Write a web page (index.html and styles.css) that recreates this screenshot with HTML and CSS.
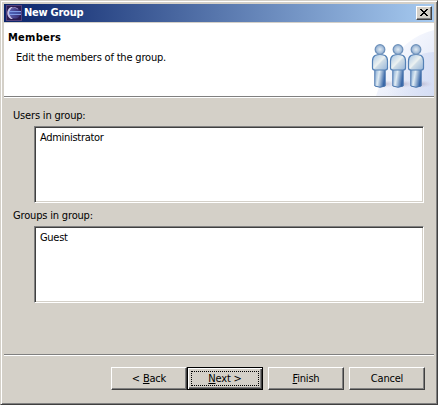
FILE: index.html
```html
<!DOCTYPE html>
<html lang="en">
<head>
<meta charset="utf-8">
<title>New Group</title>
<link rel="stylesheet" href="styles.css">
</head>
<body>
<main class="window">
  <header class="titlebar">
    <svg class="app-icon" viewBox="0 0 16 16" aria-hidden="true">
      <defs>
        <linearGradient id="orb" x1="0" y1="0" x2="1" y2="0"><stop offset="0" stop-color="#5a5fae"/><stop offset="1" stop-color="#35286c"/></linearGradient>
      </defs>
      <rect width="16" height="16" fill="#54407c"/>
      <rect x="1" y="1" width="14" height="14" fill="#2b1c50"/>
      <path d="M5 2C0 4 0 12 5 14L7 14C3 11 3 5 7 2Z" fill="#c3bfe6"/>
      <circle cx="9" cy="8" r="5.6" fill="url(#orb)"/>
      <path d="M3 6.500H15M3 9.500H15" stroke="#7f9be6"/>
      <path d="M3 8H15" stroke="#4668c4"/>
      <path d="M6 3Q9 1.500 12 4" stroke="#8f7fb8" fill="none"/>
    </svg>
    <h1 class="title">New Group</h1>
    <button class="close" aria-label="Close">
      <svg viewBox="0 0 8 7" shape-rendering="crispEdges"><path d="M0 0h2v1h1v1h2V1h1V0h2v1H7v1H6v1H5v1h1v1h1v1h1v1H6V6H5V5H3v1H2v1H0V6h1V5h1V4h1V3H2V2H1V1H0Z"/></svg>
    </button>
  </header>
  <section class="banner">
    <div class="banner-text">
      <h2 class="heading">Members</h2>
      <p class="description">Edit the members of the group.</p>
    </div>
    <svg class="people" viewBox="0 0 76 73" aria-hidden="true">
      <defs>
        <linearGradient id="body" x1="0" y1="0" x2="1" y2="1"><stop offset="0" stop-color="#a5c3e2"/><stop offset=".48" stop-color="#edf2f1"/><stop offset=".55" stop-color="#cedce6"/><stop offset="1" stop-color="#96b5d9"/></linearGradient>
        <linearGradient id="legs" x1="0" y1="0" x2="1" y2=".3"><stop offset="0" stop-color="#7fa5d0"/><stop offset=".45" stop-color="#dfebf3"/><stop offset="1" stop-color="#3766a7"/></linearGradient>
        <radialGradient id="head"><stop offset="0" stop-color="#e1ebf2"/><stop offset="1" stop-color="#8eacd0"/></radialGradient>
        <linearGradient id="glow" x1="0" y1="0" x2="1" y2="1"><stop offset="0" stop-color="#fcfdff"/><stop offset=".35" stop-color="#f5f7fd"/><stop offset="1" stop-color="#dce3f6"/></linearGradient>
        <linearGradient id="inner" x1="0" y1="0" x2="1" y2="0"><stop offset="0" stop-color="#d3dcf4" stop-opacity="0"/><stop offset="1" stop-color="#d3dcf4" stop-opacity=".8"/></linearGradient>
        <radialGradient id="shade"><stop offset="0" stop-color="#aaa5be" stop-opacity=".65"/><stop offset="1" stop-color="#cfc9da" stop-opacity="0"/></radialGradient>
        <g id="person">
          <ellipse cx="13" cy="40" rx="12" ry="4" fill="url(#shade)"/>
          <path d="M2.800 25H13.200V42Q8 44.500 2.800 42Z" fill="url(#legs)" stroke="#4774ad"/>
          <path d="M3 11.500Q8 9.500 13 11.500Q15.500 13 15.500 17V24Q15.500 26 13 26H3Q.5 26 .5 24V17Q.5 13 3 11.500Z" fill="url(#body)" stroke="#5481b6" stroke-width="1.200"/>
          <circle cx="8" cy="5.500" r="4.800" fill="url(#head)" stroke="#6f92bb" stroke-width="1.300"/>
        </g>
      </defs>
      <path d="M76 7Q49 14 35 37Q24 53 18 73H76Z" fill="url(#glow)"/>
      <path d="M76 29Q54 30 40 47Q30 59 29 73H76Z" fill="url(#inner)"/>
      <use href="#person" x="14" y="21"/>
      <use href="#person" x="32" y="21"/>
      <use href="#person" x="50" y="21"/>
    </svg>
  </section>
  <section class="content">
    <h3 class="label users-label">Users in group:</h3>
    <ul class="list"><li class="admin">Administrator</li></ul>
    <h3 class="label groups-label">Groups in group:</h3>
    <ul class="list"><li class="guest">Guest</li></ul>
  </section>
  <footer class="actions">
    <button class="button"><span>&lt; <u>B</u>ack</span></button>
    <button class="button default"><span><u>N</u>ext &gt;</span></button>
    <button class="button spaced"><span><u>F</u>inish</span></button>
    <button class="button spaced"><span>Cancel</span></button>
  </footer>
</main>
</body>
</html>
```
FILE: styles.css
```css
* { box-sizing: border-box; }
body, h1, h2, h3, p, ul { margin: 0; padding: 0; }
body {
  overflow: hidden;
  font: 11px/14px "DejaVu Sans Condensed", "DejaVu Sans", sans-serif;
  font-stretch: condensed;
  color: #000;
}
.window {
  display: flex;
  flex-direction: column;
  width: 438px;
  height: 405px;
  padding: 2px;
  background: #d4d0c8;
  border: 1px solid;
  border-color: #d4d0c8 #404040 #404040 #d4d0c8;
  box-shadow: inset 1px 1px #fff, inset -1px -1px #808080;
}
.titlebar {
  display: flex;
  align-items: center;
  flex: none;
  height: 18px;
  margin: 1px 1px 0;
  padding: 0 2px;
  background: linear-gradient(90deg, #0a246a, #a6caf0);
}
.app-icon { width: 16px; height: 16px; flex: none; }
.title {
  margin-left: 2px;
  font-size: 11px;
  line-height: 18px;
  color: #fff;
  letter-spacing: -.25px;
  white-space: nowrap;
}
.close {
  display: flex;
  justify-content: center;
  align-items: center;
  width: 16px;
  height: 14px;
  margin-left: auto;
  padding: 0 1px 1px 0;
  background: #d4d0c8;
  border: 1px solid;
  border-color: #fff #404040 #404040 #fff;
  box-shadow: inset -1px -1px #808080;
}
.close svg { width: 8px; height: 7px; }
.banner {
  display: flex;
  justify-content: space-between;
  flex: none;
  height: 75px;
  margin: 1px 1px 0;
  overflow: hidden;
  background: #fff;
  border-bottom: 1px solid #fff;
  box-shadow: inset 0 -1px #808080;
}
.banner-text { padding: 8px 0 0 4px; white-space: nowrap; }
.heading { font-size: 11px; line-height: 14px; letter-spacing: .25px; }
.description { margin: 6px 0 0 8px; letter-spacing: -.19px; }
.people { width: 76px; height: 73px; }
.content { flex: 1; padding: 11px 11px 0 10px; }
.label { font-size: 11px; font-weight: normal; line-height: 14px; letter-spacing: -.17px; white-space: nowrap; }
.groups-label { margin-top: 6px; }
.list {
  width: 390px;
  height: 77px;
  margin: 3px 0 0 21px;
  padding: 4px 3px 3px;
  list-style: none;
  letter-spacing: -.3px;
  background: #fff;
  border: 1px solid;
  border-color: #808080 #fff #fff #808080;
  box-shadow: inset 1px 1px #404040, inset -1px -1px #d4d0c8;
}
.list li { padding-left: 2px; }
.actions {
  display: flex;
  justify-content: flex-end;
  flex: none;
  height: 48px;
  margin: 0 1px;
  padding: 12px 9px 0 0;
  border-top: 1px solid #808080;
  box-shadow: inset 0 1px #fff;
}
.button {
  width: 76px;
  height: 23px;
  padding: 0;
  font: inherit;
  letter-spacing: -.2px;
  color: #000;
  background: #d4d0c8;
  border: 1px solid;
  border-color: #fff #404040 #404040 #fff;
  box-shadow: inset -1px -1px #808080;
}
.button span { display: block; line-height: 14px; }
.button u { text-underline-offset: 1px; text-decoration-thickness: 1px; }
.spaced { margin-left: 5px; }
.default {
  padding: 3px;
  border-color: #000;
  box-shadow: inset 1px 1px #fff, inset -1px -1px #404040, inset -2px -2px #808080;
}
.default span { border: 1px dotted #000; line-height: 13px; }
```
